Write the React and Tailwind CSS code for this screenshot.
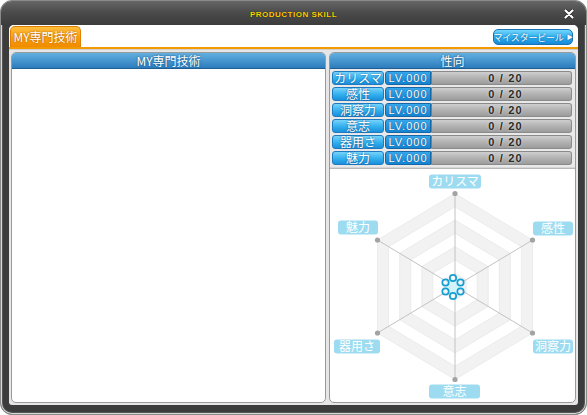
import React from 'react';

const stats = ['カリスマ', '感性', '洞察力', '意志', '器用さ', '魅力'];

const jp = "font-['Noto_Sans_CJK_JP','Noto_Sans',sans-serif]";

// radar geometry (svg coords)
const cx = 125;
const cy = 117;
const R = 93;
const HX = 77.5;
const dirs = [
  [0, -1],
  [1, -0.5],
  [1, 0.5],
  [0, 1],
  [-1, 0.5],
  [-1, -0.5],
];
const hexPoints = (s) =>
  dirs.map(([dx, dy]) => `${cx + dx * HX * s},${cy + dy * R * s}`).join(' ');

const labels = [
  { t: 'カリスマ', x: 99, y: 5, w: 52 },
  { t: '感性', x: 203, y: 52, w: 40 },
  { t: '洞察力', x: 203, y: 170, w: 40 },
  { t: '意志', x: 99, y: 215, w: 51 },
  { t: '器用さ', x: 4, y: 170, w: 46 },
  { t: '魅力', x: 8, y: 51, w: 40 },
];

const fx = 123;
const fy = 117.5;
const flower = [
  [0, -9],
  [7.5, -4.5],
  [7.5, 4.5],
  [0, 9],
  [-7.5, 4.5],
  [-7.5, -4.5],
];

const Radar = () => (
  <svg viewBox="0 0 245 232" className="w-full h-full block">
    {[7, 6, 5, 4, 3, 2, 1].map((k) => (
      <polygon
        key={k}
        points={hexPoints(k / 7)}
        fill={k % 2 === 1 ? '#f2f2f2' : '#ffffff'}
        stroke="#e9e9e9"
        strokeWidth="0.8"
      />
    ))}
    {dirs.map(([dx, dy], i) => (
      <line
        key={i}
        x1={cx}
        y1={cy}
        x2={cx + dx * HX}
        y2={cy + dy * R}
        stroke="#c2c2c2"
        strokeWidth="1"
      />
    ))}
    {dirs.map(([dx, dy], i) => (
      <circle key={i} cx={cx + dx * HX} cy={cy + dy * R} r="2.6" fill="#a3a3a3" />
    ))}
    <polygon
      points={flower.map(([x, y]) => `${fx + x},${fy + y}`).join(' ')}
      fill="#d2f3fa"
    />
    {flower.map(([x, y], i) => (
      <circle
        key={i}
        cx={fx + x}
        cy={fy + y}
        r="3.2"
        fill="#ffffff"
        fillOpacity="0.6"
        stroke="#179fd3"
        strokeWidth="1.7"
      />
    ))}
    {labels.map((l) => (
      <g key={l.t}>
        <rect x={l.x} y={l.y} width={l.w} height="14" rx="3" fill="#9ddcf0" />
        <text
          x={l.x + l.w / 2}
          y={l.y + 11.5}
          textAnchor="middle"
          fontSize="12"
          fill="#ffffff"
          fontFamily="'Noto Sans CJK JP', sans-serif"
        >
          {l.t}
        </text>
      </g>
    ))}
  </svg>
);

const PanelHeader = ({ children }) => (
  <div
    className={`h-[16px] shrink-0 flex items-center justify-center bg-gradient-to-b from-[#62b0e0] to-[#2c7cbd] border-b border-[#1f5f95] text-white text-[12px] leading-none ${jp} [text-shadow:0_0_2px_#0f3f70]`}
  >
    {children}
  </div>
);

export default function App() {
  return (
    <div className="w-[587px] h-[415px] bg-white">
      <div className="w-full h-full rounded-[12px] border border-[#8a8a8a] bg-[#3c3c3c] flex flex-col overflow-hidden shadow-[inset_0_0_0_1px_#d8d8d8,inset_0_0_0_2px_#555]">
        {/* title bar */}
        <div className="h-[24px] shrink-0 relative flex items-center justify-center bg-gradient-to-b from-[#666] via-[#4a4a4a] to-[#3c3c3c] rounded-t-[11px]">
          <span className="font-['Liberation_Sans',sans-serif] font-bold text-[8px] tracking-[0.5px] text-[#ffd200] mt-[4px] [text-shadow:0_0_1px_#000]">
            PRODUCTION SKILL
          </span>
          <svg
            viewBox="0 0 10 10"
            className="absolute right-[12px] top-[8px] w-[10px] h-[10px]"
          >
            <path d="M1.5 1.5 L8.5 8.5 M8.5 1.5 L1.5 8.5" stroke="#222" strokeWidth="3.4" strokeLinecap="round" />
            <path d="M1.5 1.5 L8.5 8.5 M8.5 1.5 L1.5 8.5" stroke="#fff" strokeWidth="2.2" strokeLinecap="round" />
          </svg>
        </div>

        {/* inner area */}
        <div className="flex-1 mx-[8px] mb-[9px] rounded-t-[5px] rounded-b-[3px] bg-[#e6e6e6] flex flex-col overflow-hidden">
          {/* tab bar */}
          <div className="h-[22px] shrink-0 bg-white flex items-end justify-between pl-[1px] pr-[5px]">
            <div
              className={`h-[21px] w-[71px] rounded-t-[5px] bg-gradient-to-b from-[#ffbe3a] via-[#f9a10e] to-[#f08b00] border border-b-0 border-[#e08000] flex items-center justify-center text-white text-[12px] leading-none ${jp} [text-shadow:0_0_2px_#9a4d00]`}
            >
              MY専門技術
            </div>
            <div
              className={`mb-[2px] h-[16px] w-[80px] rounded-[5px] bg-gradient-to-b from-[#6fd6fc] via-[#2fb0ee] to-[#158ad9] border border-[#1a72b5] flex items-center justify-center gap-[3px] whitespace-nowrap text-white text-[9px] tracking-[-0.2px] leading-none ${jp} [text-shadow:0_0_2px_#0b4f8a]`}
            >
              マイスタービール
              <span className="text-[6px]">▶</span>
            </div>
          </div>
          <div className="h-[2px] shrink-0 bg-[#f39a00]" />
          <div className="h-[1px] shrink-0 bg-[#cfcfcf]" />

          {/* panels */}
          <div className="flex-1 flex gap-[3px] px-[2px] pt-[2px] pb-[2px]">
            <div className="w-[315px] flex flex-col bg-white border border-[#9a9a9a] rounded-[5px] overflow-hidden">
              <PanelHeader>MY専門技術</PanelHeader>
              <div className="flex-1" />
            </div>

            <div className="flex-1 flex flex-col bg-white border border-[#9a9a9a] rounded-[5px] overflow-hidden">
              <PanelHeader>性向</PanelHeader>
              <div className="flex flex-col gap-[2px] pl-[2px] pr-[3px] pt-[2px] pb-[2px] bg-[#e9e9e9]">
                {stats.map((s) => (
                  <div key={s} className="h-[14px] flex">
                    <div
                      className={`w-[52px] rounded-[3px] bg-gradient-to-b from-[#74d3fb] via-[#35b2ef] to-[#1a90db] border border-[#1f7bc0] flex items-center justify-center text-white text-[12px] leading-none ${jp} [text-shadow:0_0_2px_#0b4a85]`}
                    >
                      {s}
                    </div>
                    <div className="ml-[1px] w-[46px] rounded-l-[3px] bg-gradient-to-b from-[#36a7ea] to-[#1384d2] border border-[#1766a6] flex items-center justify-center text-white text-[11px] leading-none font-['Liberation_Sans',sans-serif] tracking-[1px] [text-shadow:0_0_1px_#0a3c6c]">
                      LV.000
                    </div>
                    <div className="flex-1 pl-[8px] rounded-r-[3px] bg-gradient-to-b from-[#cfcfcf] via-[#b2b2b2] to-[#9c9c9c] border border-[#8a8a8a] border-l-[#7d8a3a] flex items-center justify-center text-[#2a2a2a] text-[11px] leading-none font-bold font-['Liberation_Sans',sans-serif] tracking-[1.2px] [text-shadow:0_0_2px_#eee]">
                      0 / 20
                    </div>
                  </div>
                ))}
              </div>
              <div className="h-[2px] shrink-0 bg-[#b8b8b8] border-t border-[#d6d6d6]" />
              <div className="flex-1">
                <Radar />
              </div>
            </div>
          </div>
        </div>
      </div>
    </div>
  );
}
